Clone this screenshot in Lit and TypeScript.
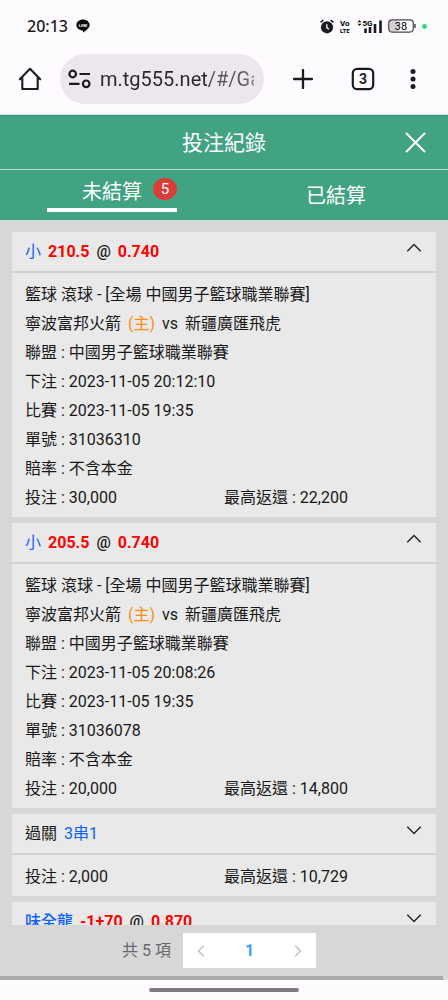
import { LitElement, html, css, svg, nothing } from "lit";
import { customElement, property, state } from "lit/decorators.js";

interface Bet {
  pick: string;
  team?: boolean;
  label?: string;
  line?: string;
  odds?: string;
  open: boolean;
  league?: string;
  placed?: string;
  starts?: string;
  ticket?: string;
  stake?: string;
  payout?: string;
}

const LEAGUE = "中國男子籃球職業聯賽";

const BETS: Bet[] = [
  { pick: "小", line: "210.5", odds: "0.740", open: true, league: LEAGUE, placed: "2023-11-05 20:12:10", starts: "2023-11-05 19:35", ticket: "31036310", stake: "30,000", payout: "22,200" },
  { pick: "小", line: "205.5", odds: "0.740", open: true, league: LEAGUE, placed: "2023-11-05 20:08:26", starts: "2023-11-05 19:35", ticket: "31036078", stake: "20,000", payout: "14,800" },
  { label: "過關", pick: "3串1", open: false, stake: "2,000", payout: "10,729" },
  { pick: "味全龍", team: true, line: "-1+70", odds: "0.870", open: false },
];

@customElement("status-bar")
class StatusBar extends LitElement {
  static styles = css`
    :host {
      display: flex;
      align-items: center;
      justify-content: space-between;
      height: 52px;
      padding: 0 21px 0 27px;
      color: #1b1a1e;
    }
    .side { display: flex; align-items: center; }
    .left { gap: 8px; }
    .time { font: 500 16px/20px "Noto Sans", Roboto, sans-serif; }
    .right { gap: 6px; }
    svg { display: block; }
    .small { font: 700 8px/8px Roboto, sans-serif; }
    .lte { font: 700 6px/6px Roboto, sans-serif; }
    .line { font: 700 4px/4px Roboto, sans-serif; }
    .charge { font: 400 11px/11px Roboto, sans-serif; }
  `;
  render() {
    return html`
      <div class="side left">
        <span class="time">20:13</span>
        <svg width="14" height="14" viewBox="0 0 14 14" aria-label="LINE">
          <path d="M7 .5C10.700 .5 13.600 2.900 13.600 6C13.600 9.200 9.500 11.600 7.300 13.500C6.900 13.700 7 12.500 7 11.600C3.300 11.500 .400 9.100 .400 6C.400 2.900 3.300 .5 7 .5Z" fill="#0b0b0d" />
          <text class="line" x="7" y="7.600" text-anchor="middle" fill="#fff">LINE</text>
        </svg>
      </div>
      <div class="side right">
        <svg width="14" height="15" viewBox="0 0 14 15" aria-hidden="true">
          <circle cx="7" cy="8.300" r="6.100" fill="#1b1a1e" />
          <path d="M.6 3.400L3.400 1M13.400 3.400L10.600 1" stroke="#1b1a1e" stroke-width="1.500" />
          <path d="M6.800 5.200V8.600L8.800 10.300" fill="none" stroke="#fff" stroke-width="1.300" />
        </svg>
        <svg width="11" height="15" viewBox="0 0 11 15" aria-hidden="true">
          <text class="small" x="0" y="7">Vo</text>
          <text class="lte" x="0" y="14">LTE</text>
        </svg>
        <svg width="25" height="15" viewBox="0 0 25 15" aria-hidden="true">
          <path d="M.5 3.300L2.500 1L4.500 3.300ZM.5 4.700H4.500L2.500 7Z" fill="#1b1a1e" />
          <text class="small" x="5.500" y="6.500">5G</text>
          <path d="M8.500 9.500V14M13 8V14M18 5V14M23.500 1.500V14" stroke="#1b1a1e" stroke-width="2.600" />
        </svg>
        <svg width="28" height="14" viewBox="0 0 28 14" aria-label="38%">
          <rect x="1" y="1.500" width="10" height="11" rx="3" fill="#d3d1d5" />
          <rect x=".7" y=".9" width="24.600" height="12.200" rx="3.500" fill="none" stroke="#48464c" stroke-width="1.200" />
          <path d="M27 5V9" stroke="#48464c" stroke-width="1.500" />
          <text class="charge" x="13" y="11" text-anchor="middle">38</text>
        </svg>
        <svg width="5" height="5" viewBox="0 0 5 5" aria-hidden="true"><circle cx="2.500" cy="2.500" r="2.400" fill="#2bd67b" /></svg>
      </div>
    `;
  }
}

@customElement("browser-bar")
class BrowserBar extends LitElement {
  static styles = css`
    :host {
      display: flex;
      align-items: center;
      height: 63px;
      box-sizing: border-box;
      padding: 0 23px 8px 18px;
      border-bottom: 1px solid #e6dbe2;
    }
    button {
      display: grid;
      place-items: center;
      width: 24px;
      height: 24px;
      padding: 0;
      border: 0;
      background: none;
    }
    svg { display: block; }
    .url {
      display: flex;
      align-items: center;
      flex: 1;
      min-width: 0;
      gap: 9px;
      height: 50px;
      box-sizing: border-box;
      margin-left: 18px;
      padding: 0 10px 0 8px;
      border-radius: 25px;
      background: #eee6ed;
    }
    .address {
      flex: 1;
      min-width: 0;
      width: 0;
      padding: 0;
      border: 0;
      outline: 0;
      font: 400 20px/28px Roboto, sans-serif;
      color: transparent;
      background: linear-gradient(90deg, #2a272c 106px, #57535a 112px, #57535a 142px, #8d8890 154px);
      -webkit-background-clip: text;
      background-clip: text;
    }
    .actions { display: flex; gap: 36px; margin: 0 26px 0 27px; }
    .count { font: 700 14px/16px Roboto, sans-serif; fill: #1d1b20; }
  `;
  render() {
    return html`
      <button aria-label="首頁">
        <svg width="24" height="24" viewBox="0 0 24 24" fill="none" stroke="#1d1b20" stroke-width="2.100" stroke-linejoin="round" stroke-linecap="round">
          <path d="M1.800 12.300L12 1.800L22.200 12.300M4.300 10.500V22H19.700V10.500" />
        </svg>
      </button>
      <div class="url">
        <svg width="23" height="20" viewBox="0 0 23 20" fill="none" stroke="#1d1b20" stroke-width="2.200" aria-hidden="true">
          <circle cx="4.700" cy="5" r="3.300" />
          <path d="M11.500 5H22M1 14.800H11.500" />
          <circle cx="18.200" cy="14.800" r="3.300" />
        </svg>
        <input class="address" aria-label="網址" .value=${"m.tg555.net/#/Game"} />
      </div>
      <div class="actions">
        <button aria-label="新分頁">
          <svg width="20" height="20" viewBox="0 0 20 20" stroke="#1d1b20" stroke-width="2.300" stroke-linecap="round"><path d="M10 1V19M1 10H19" /></svg>
        </button>
        <button aria-label="分頁">
          <svg width="24" height="24" viewBox="0 0 24 24">
            <rect x="1.800" y="1.800" width="20.400" height="20.400" rx="4.500" fill="none" stroke="#1d1b20" stroke-width="2.200" />
            <text class="count" x="12" y="17" text-anchor="middle">3</text>
          </svg>
        </button>
      </div>
      <button aria-label="選單">
        <svg width="6" height="22" viewBox="0 0 6 22" fill="#1d1b20"><circle cx="3" cy="3.500" r="2.500" /><circle cx="3" cy="11" r="2.500" /><circle cx="3" cy="18.500" r="2.500" /></svg>
      </button>
    `;
  }
}

@customElement("bet-card")
class BetCard extends LitElement {
  @property({ attribute: false }) bet!: Bet;
  static styles = css`
    :host { display: block; flex: none; background: #e9e9e9; }
    .head {
      display: flex;
      align-items: center;
      width: 100%;
      height: 41px;
      box-sizing: border-box;
      padding: 0 14px 0 13px;
      border: 0;
      border-bottom: 2px solid #d2d2d2;
      background: none;
      color: #181818;
      font: inherit;
      text-align: left;
    }
    .title { display: flex; gap: 7px; flex: 1; }
    .bold { font-weight: 500; }
    .blue { color: #0f62fe; }
    .red { color: #f00; font-weight: 700; }
    .at { font-weight: 500; }
    .orange { color: #ff8c0f; }
    .chevron { display: block; margin-bottom: 7px; }
    .body { padding: 7px 13px 5px; line-height: 29px; }
    .row { white-space: nowrap; }
    .teams { display: flex; gap: 7px; }
    .money { display: grid; grid-template-columns: 1fr 1fr; }
  `;
  render() {
    const b = this.bet;
    return html`
      <button class="head" aria-expanded=${b.open}>
        <span class="title">
          ${b.label ? html`<span>${b.label}</span>` : nothing}
          <span class="blue ${b.team ? "bold" : ""}">${b.pick}</span>
          ${b.line ? html`<span class="red">${b.line}</span><span class="at">@</span><span class="red">${b.odds}</span>` : nothing}
        </span>
        <svg class="chevron" width="16" height="10" viewBox="0 0 16 10" fill="none" stroke="#222" stroke-width="1.400">
          ${b.open ? svg`<path d="M1.300 8.300L8 1.600L14.700 8.300" />` : svg`<path d="M1.300 1.700L8 8.400L14.700 1.700" />`}
        </svg>
      </button>
      ${b.stake
        ? html`<div class="body">
            ${b.league
              ? html`
                  <div class="row">籃球 滾球 - [全場 ${b.league}]</div>
                  <div class="row teams"><span>寧波富邦火箭</span><span class="orange">(主)</span><span>vs</span><span>新疆廣匯飛虎</span></div>
                  <div class="row">聯盟 : ${b.league}</div>
                  <div class="row">下注 : ${b.placed}</div>
                  <div class="row">比賽 : ${b.starts}</div>
                  <div class="row">單號 : ${b.ticket}</div>
                  <div class="row">賠率 : 不含本金</div>
                `
              : nothing}
            <div class="row money"><span>投注 : ${b.stake}</span><span>最高返還 : ${b.payout}</span></div>
          </div>`
        : nothing}
    `;
  }
}

@customElement("app-root")
class AppRoot extends LitElement {
  @state() private tab = 0;
  static styles = css`
    :host {
      display: flex;
      flex-direction: column;
      height: 100vh;
      background: #fefbff;
      color: #181818;
      font: 400 16px/24px Roboto, "Noto Sans CJK TC", sans-serif;
    }
    status-bar, browser-bar, .title-bar, .tabs, .pager, .gesture { flex: none; }
    button { padding: 0; border: 0; background: none; font: inherit; color: inherit; }
    svg { display: block; }
    .title-bar {
      display: grid;
      grid-template-columns: 1fr auto 1fr;
      align-items: center;
      height: 55px;
      box-sizing: border-box;
      padding: 0 22px;
      border-top: 1px solid #369471;
      border-bottom: 1px solid #c3d9d0;
      background: #41a381;
      color: #fff;
    }
    .heading { grid-column: 2; margin: 0; font-size: 21px; line-height: 30px; font-weight: 400; }
    .close { justify-self: end; }
    .tabs { display: grid; grid-template-columns: 1fr 1fr; height: 50px; background: #41a381; color: #fff; }
    .tab { display: grid; place-items: center; font-size: 20px; line-height: 30px; }
    .tab-label { position: relative; width: 130px; padding: 3px 0 1px; }
    .tab-label.on { margin-bottom: 4px; border-bottom: 4px solid #fff; }
    .badge {
      position: absolute;
      right: 0;
      top: 4px;
      width: 24px;
      height: 22px;
      border-radius: 50%;
      background: #dc3d39;
      font-size: 15px;
      line-height: 22px;
    }
    .list {
      display: flex;
      flex-direction: column;
      gap: 6px;
      flex: 1;
      min-height: 0;
      overflow-y: auto;
      scrollbar-width: none;
      padding: 12px 12px 0;
      background: #d7d7d7;
    }
    .pager {
      display: flex;
      align-items: center;
      justify-content: center;
      gap: 12px;
      height: 51px;
      padding-right: 10px;
      background: #d7d7d7;
      color: #66686c;
    }
    .pages { display: grid; grid-template-columns: 36px 61px 36px; height: 35px; background: #fff; }
    .step { display: grid; place-items: center; }
    .current { color: #409eff; font-weight: 700; }
    .scrollbar { flex: none; height: 4px; background: #dcdadd; padding-right: 5px; }
    .thumb { height: 4px; background: #aaa9ab; }
    .gesture { display: grid; place-items: center; height: 20px; }
    .pill { width: 150px; height: 4px; border-radius: 2px; background: #7e7a80; }
  `;
  render() {
    return html`
      <status-bar></status-bar>
      <browser-bar></browser-bar>
      <header class="title-bar">
        <h1 class="heading">投注紀錄</h1>
        <button class="close" aria-label="關閉">
          <svg width="21" height="21" viewBox="0 0 21 21" stroke="#fff" stroke-width="2" stroke-linecap="round"><path d="M1.500 1.500L19.500 19.500M19.500 1.500L1.500 19.500" /></svg>
        </button>
      </header>
      <nav class="tabs">
        <button class="tab" @click=${() => (this.tab = 0)}>
          <span class="tab-label ${this.tab === 0 ? "on" : ""}">未結算<span class="badge">5</span></span>
        </button>
        <button class="tab" @click=${() => (this.tab = 1)}>
          <span class="tab-label ${this.tab === 1 ? "on" : ""}">已結算</span>
        </button>
      </nav>
      <main class="list">${BETS.map((bet) => html`<bet-card .bet=${bet}></bet-card>`)}</main>
      <footer class="pager">
        <span>共 5 項</span>
        <div class="pages">
          <button class="step" aria-label="上一頁"><svg width="8" height="12" viewBox="0 0 8 12" fill="none" stroke="#c0c4cc" stroke-width="1.500"><path d="M6.800 .8L1.500 6L6.800 11.200" /></svg></button>
          <button class="current">1</button>
          <button class="step" aria-label="下一頁"><svg width="8" height="12" viewBox="0 0 8 12" fill="none" stroke="#c0c4cc" stroke-width="1.500"><path d="M1.200 .8L6.500 6L1.200 11.200" /></svg></button>
        </div>
      </footer>
      <div class="scrollbar"><div class="thumb"></div></div>
      <div class="gesture"><div class="pill"></div></div>
    `;
  }
}
